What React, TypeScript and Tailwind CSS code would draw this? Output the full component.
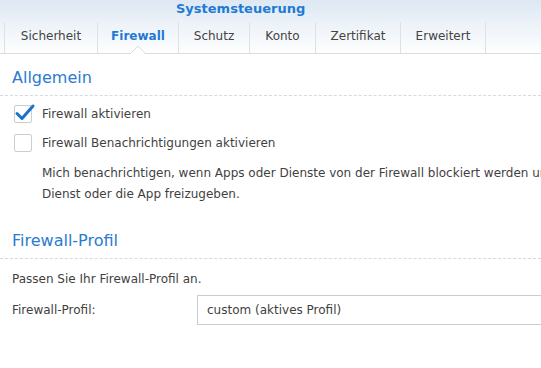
import { useState } from "react";

const tabs = [
  { label: "Sicherheit", w: "w-[93px]" },
  { label: "Firewall", w: "w-[81px]" },
  { label: "Schutz", w: "w-[71px]" },
  { label: "Konto", w: "w-[66px]" },
  { label: "Zertifikat", w: "w-[85px]" },
  { label: "Erweitert", w: "w-[85px]" },
];

const Checkbox = ({ checked }: { checked: boolean }) => (
  <div className="relative h-[18px] w-[18px] shrink-0 rounded-[2px] border border-[#c9ced5] bg-white">
    {checked && (
      <svg className="absolute -left-[1px] -top-[3px]" width="22" height="20" viewBox="0 0 22 20">
        <path d="M3 10.5 L8 15.5 L19 3" fill="none" stroke="#1a72d0" strokeWidth="3" strokeLinecap="round" strokeLinejoin="round" />
      </svg>
    )}
  </div>
);

const SectionTitle = ({ children }: { children: string }) => (
  <div className="border-b border-dashed border-[#d3dae2] pb-[5px] pl-3 text-[16px] text-[#2b7bd0]">{children}</div>
);

export default function App() {
  const [active] = useState("Firewall");
  return (
    <div className="h-[368px] w-[541px] overflow-hidden bg-white font-['DejaVu_Sans',Verdana,sans-serif] text-[12px] text-[#3f3f3f]">
      {/* header */}
      <div className="bg-gradient-to-b from-[#dde8f3] to-white">
        <div className="pl-[176px] text-[13px] font-bold leading-[18px] text-[#1f7ad4]">Systemsteuerung</div>
        <div className="relative mt-[4px] flex h-[32px] border-b border-[#d9dde2] pl-[4px]">
          {tabs.map((t) => (
            <div
              key={t.label}
              className={
                "relative flex items-center justify-center border-l border-[#dde2e8] pb-[3px] text-[12px] " +
                t.w +
                (t.label === active ? " font-bold text-[#1f7ad4]" : " text-[#444]")
              }
            >
              {t.label}
              {t.label === active && (
                <svg className="absolute -bottom-[1px] left-1/2 -translate-x-1/2" width="16" height="8" viewBox="0 0 16 8">
                  <path d="M0 8 L8 0 L16 8" fill="white" stroke="#d9dde2" strokeWidth="1" />
                  <path d="M1 8 L15 8" stroke="white" strokeWidth="2" />
                </svg>
              )}
            </div>
          ))}
          <div className="border-l border-[#dde2e8]" />
        </div>
      </div>

      {/* Allgemein */}
      <div className="mt-[12px]">
        <SectionTitle>Allgemein</SectionTitle>
        <div className="mt-[9px] flex flex-col gap-[11px] pl-[14px]">
          <div className="flex items-center gap-[10px]">
            <Checkbox checked />
            <span>Firewall aktivieren</span>
          </div>
          <div className="flex items-center gap-[10px]">
            <Checkbox checked={false} />
            <span>Firewall Benachrichtigungen aktivieren</span>
          </div>
        </div>
        <p className="mt-[11px] whitespace-nowrap pl-[42px] leading-[21px]">
          Mich benachrichtigen, wenn Apps oder Dienste von der Firewall blockiert werden und mir erlauben, den
          <br />
          Dienst oder die App freizugeben.
        </p>
      </div>

      {/* Firewall-Profil */}
      <div className="mt-[24px]">
        <SectionTitle>Firewall-Profil</SectionTitle>
        <div className="mt-[11px] pl-3">Passen Sie Ihr Firewall-Profil an.</div>
        <div className="mt-[7px] flex items-center pl-3">
          <span className="w-[185px]">Firewall-Profil:</span>
          <div className="flex h-[30px] flex-1 items-center border border-r-0 border-[#c9cdd3] pl-[9px]">custom (aktives Profil)</div>
        </div>
      </div>
    </div>
  );
}
